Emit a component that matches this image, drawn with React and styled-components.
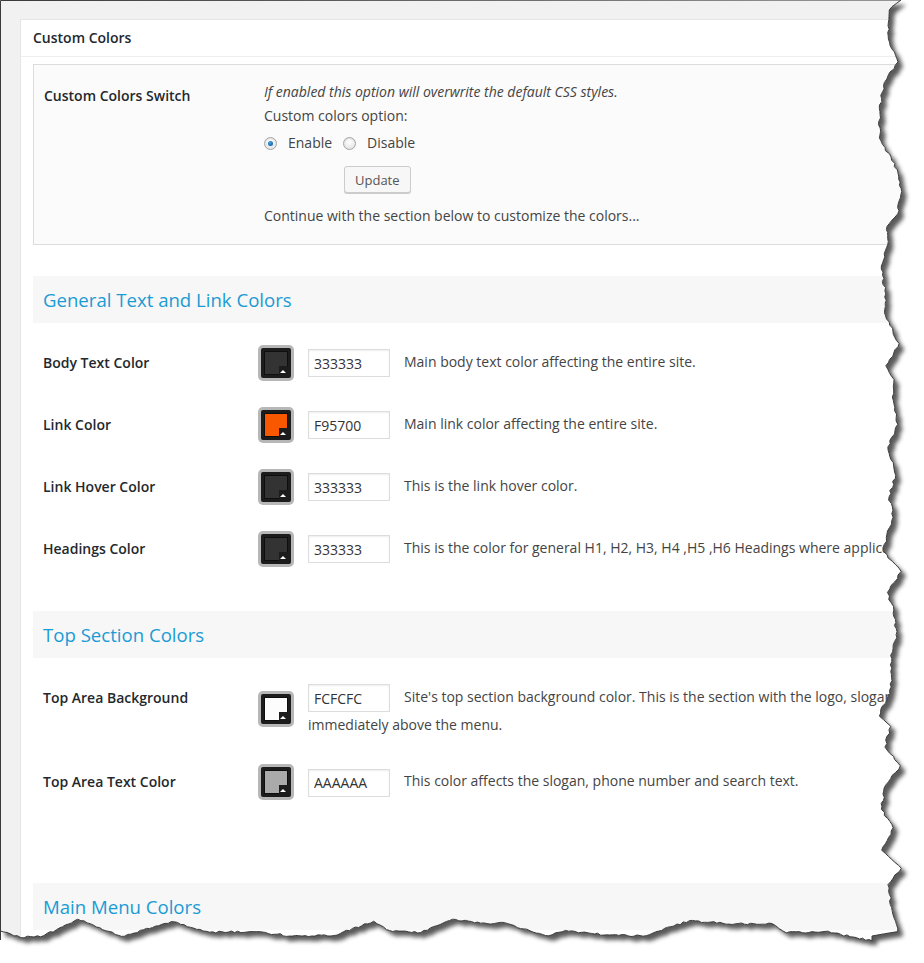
import React from "react";
import styled, { createGlobalStyle } from "styled-components";

const GlobalStyle = createGlobalStyle`
  html, body {
    margin: 0;
    padding: 0;
    background: #fff;
  }
  body {
    font-family: "Open Sans", "Liberation Sans", sans-serif;
    font-size: 14px;
    color: #444;
  }
`;

// seeded random so the torn edge is the same on every run
const rng = (seed) => {
  let s = seed;
  return () => {
    s = (s * 16807) % 2147483647;
    return (s - 1) / 2147483646;
  };
};

const buildEdge = () => {
  const r = rng(11);
  const pts = [[901, 0]];
  let prev = [901, 0];
  let y = 0;
  while (y < 932) {
    const step = 10 + r() * 22;
    const ny = Math.min(y + step, 936);
    const nx = ny >= 936 ? 872 : 879 + r() * 23;
    const n = Math.max(2, Math.floor((ny - y) / 3));
    for (let i = 1; i <= n; i++) {
      const t = i / n;
      const jit = i < n ? (r() - 0.5) * 2.6 : 0;
      pts.push([prev[0] + (nx - prev[0]) * t + jit, y + (ny - y) * t]);
    }
    prev = [nx, ny];
    y = ny;
  }
  // bottom edge, right to left
  let x = prev[0];
  let by = 941;
  pts.push([x, by]);
  prev = [x, by];
  while (x > 0) {
    const step = 14 + r() * 36;
    const nx = Math.max(x - step, 0);
    const peak = r() < 0.22;
    const ny = peak ? 918 + r() * 6 : 929 + r() * 9;
    const n = Math.max(2, Math.floor((x - nx) / 3));
    for (let i = 1; i <= n; i++) {
      const t = i / n;
      const jit = i < n ? (r() - 0.5) * 2 : 0;
      pts.push([prev[0] + (nx - prev[0]) * t, prev[1] + (ny - prev[1]) * t + jit]);
    }
    prev = [nx, ny];
    x = nx;
  }
  return pts;
};

const EDGE = buildEdge();
const EDGE_POINTS = EDGE.map((p) => `${p[0].toFixed(1)},${p[1].toFixed(1)}`).join(" ");
const CLIP = `polygon(0px 0px, ${EDGE.map((p) => `${p[0].toFixed(1)}px ${p[1].toFixed(1)}px`).join(", ")})`;

const Frame = styled.div`
  position: relative;
  width: 924px;
  height: 963px;
  overflow: hidden;
  background: #fff;
`;

const Shadow = styled.svg`
  position: absolute;
  top: 0;
  left: 0;
  width: 924px;
  height: 963px;
  z-index: 0;
`;

const Outline = styled.svg`
  position: absolute;
  top: 0;
  left: 0;
  width: 924px;
  height: 963px;
  z-index: 2;
  pointer-events: none;
`;

const Paper = styled.div`
  position: relative;
  z-index: 1;
  width: 924px;
  height: 963px;
  box-sizing: border-box;
  padding: 19px 0 0 20px;
  background: #f1f1f1;
  overflow: hidden;
`;

const Panel = styled.div`
  width: 1200px;
  background: #fff;
  border: 1px solid #e5e5e5;
`;

const PanelHeader = styled.h3`
  margin: 0;
  height: 36px;
  line-height: 36px;
  padding-left: 12px;
  font-size: 14px;
  font-weight: 600;
  color: #23282d;
  border-bottom: 1px solid #eee;
`;

const PanelBody = styled.div`
  padding: 7px 0 0 12px;
`;

const SwitchBox = styled.div`
  display: grid;
  grid-template-columns: 220px 1fr;
  border: 1px solid #dcdcdc;
  background: #fbfbfb;
  padding: 15px 10px 16px;
`;

const SwitchLabel = styled.div`
  margin-top: 4px;
  line-height: 24px;
  font-weight: 600;
  color: #23282d;
`;

const SwitchColumn = styled.div`
  display: flex;
  flex-direction: column;
  align-items: flex-start;
  line-height: 24px;
`;

const Note = styled.div`
  font-style: italic;
`;

const RadioRow = styled.div`
  display: flex;
  align-items: center;
  height: 26px;
  margin-top: 2px;
  gap: 11px;
`;

const RadioItem = styled.label`
  display: flex;
  align-items: center;
  gap: 11px;
`;

const Radio = styled.span`
  position: relative;
  width: 11px;
  height: 11px;
  border-radius: 50%;
  border: 1px solid #a4a4a4;
  background: radial-gradient(circle at 50% 35%, #fff 0%, #e8e8e8 70%, #d4d4d4 100%);
  box-shadow: inset 0 1px 1px rgba(0, 0, 0, 0.08);

  &::after {
    content: "";
    display: ${(p) => (p.$checked ? "block" : "none")};
    position: absolute;
    top: 3px;
    left: 3px;
    width: 5px;
    height: 5px;
    border-radius: 50%;
    background: radial-gradient(circle at 40% 35%, #4aa3e0 0%, #1a6fb5 60%, #0f4d88 100%);
  }
`;

const Button = styled.button`
  margin: 10px 0 0 80px;
  height: 27px;
  padding: 0 10px;
  font-family: inherit;
  font-size: 13px;
  color: #555;
  background: #f7f7f7;
  border: 1px solid #ccc;
  border-radius: 3px;
  box-shadow: 0 1px 0 #ccc;
`;

const Continue = styled.div`
  margin-top: 11px;
`;

const Section = styled.div`
  margin-top: ${(p) => p.$gap || 31}px;
`;

const SectionTitle = styled.h2`
  margin: 0 0 9px;
  height: 47px;
  line-height: 48px;
  padding-left: 10px;
  background: #f7f7f7;
  font-size: 18.6px;
  font-weight: 400;
  color: #1a9bd4;
`;

const Row = styled.div`
  display: grid;
  grid-template-columns: 215px 50px 800px;
  align-items: start;
  padding: 13px 0 13px 10px;
`;

const RowLabel = styled.div`
  padding-top: 8px;
  line-height: 20px;
  font-weight: 600;
  color: #23282d;
`;

const Swatch = styled.div`
  align-self: center;
  width: 36px;
  height: 36px;
  box-sizing: border-box;
  padding: 3px;
  border-radius: 5px;
  background: #b7b7b7;
`;

const SwatchFrame = styled.div`
  position: relative;
  width: 30px;
  height: 30px;
  box-sizing: border-box;
  padding: 3px;
  border-radius: 2px;
  background: #1c1c1c;

  &::before {
    content: "";
    display: block;
    width: 24px;
    height: 24px;
    border: 1px solid #0e0e0e;
    background: ${(p) => p.$color};
    box-sizing: border-box;
  }
  &::after {
    content: "";
    position: absolute;
    right: 3px;
    bottom: 3px;
    width: 9px;
    height: 9px;
    background: #1c1c1c;
  }
`;

const Arrow = styled.span`
  position: absolute;
  right: 5px;
  bottom: 5px;
  z-index: 1;
  width: 0;
  height: 0;
  border-left: 3px solid transparent;
  border-right: 3px solid transparent;
  border-bottom: 3px solid #fff;
`;

const Content = styled.div`
  padding-top: 4px;
  line-height: 26px;
  color: #444;
`;

const HexInput = styled.input`
  width: 82px;
  height: 28px;
  box-sizing: border-box;
  margin: 0 14px 0 0;
  padding: 0 5px;
  vertical-align: middle;
  font-family: inherit;
  font-size: 14px;
  color: #333;
  background: #fff;
  border: 1px solid #ddd;
  box-shadow: inset 0 1px 2px rgba(0, 0, 0, 0.07);
`;

const general = [
  { label: "Body Text Color", color: "#333333", hex: "333333", text: "Main body text color affecting the entire site." },
  { label: "Link Color", color: "#F95700", hex: "F95700", text: "Main link color affecting the entire site." },
  { label: "Link Hover Color", color: "#333333", hex: "333333", text: "This is the link hover color." },
  {
    label: "Headings Color",
    color: "#333333",
    hex: "333333",
    text: "This is the color for general H1, H2, H3, H4 ,H5 ,H6 Headings where applicable.",
  },
];

const topArea = [
  {
    label: "Top Area Background",
    color: "#FCFCFC",
    hex: "FCFCFC",
    text: "Site's top section background color. This is the section with the logo, slogan, phone number and search, immediately above the menu.",
  },
  { label: "Top Area Text Color", color: "#AAAAAA", hex: "AAAAAA", text: "This color affects the slogan, phone number and search text." },
];

const ColorRow = ({ item }) => (
  <Row>
    <RowLabel>{item.label}</RowLabel>
    <Swatch>
      <SwatchFrame $color={item.color}>
        <Arrow />
      </SwatchFrame>
    </Swatch>
    <Content>
      <HexInput readOnly value={item.hex} />
      {item.text}
    </Content>
  </Row>
);

const App = () => {
  return (
    <Frame>
      <GlobalStyle />
      <Shadow viewBox="0 0 924 963">
        <defs>
          <filter id="tear-blur" x="-5%" y="-5%" width="110%" height="110%">
            <feGaussianBlur stdDeviation="2.2" />
          </filter>
        </defs>
        <polygon
          points={`0,0 ${EDGE_POINTS}`}
          transform="translate(5 5)"
          fill="#3c3c3c"
          opacity="0.85"
          filter="url(#tear-blur)"
        />
      </Shadow>
      <Paper style={{ clipPath: CLIP }}>
        <Panel>
          <PanelHeader>Custom Colors</PanelHeader>
          <PanelBody>
            <SwitchBox>
              <SwitchLabel>Custom Colors Switch</SwitchLabel>
              <SwitchColumn>
                <Note>If enabled this option will overwrite the default CSS styles.</Note>
                <div>Custom colors option:</div>
                <RadioRow>
                  <RadioItem>
                    <Radio $checked />
                    Enable
                  </RadioItem>
                  <RadioItem>
                    <Radio />
                    Disable
                  </RadioItem>
                </RadioRow>
                <Button>Update</Button>
                <Continue>Continue with the section below to customize the colors...</Continue>
              </SwitchColumn>
            </SwitchBox>

            <Section>
              <SectionTitle>General Text and Link Colors</SectionTitle>
              {general.map((item) => (
                <ColorRow key={item.label} item={item} />
              ))}
            </Section>

            <Section>
              <SectionTitle>Top Section Colors</SectionTitle>
              {topArea.map((item) => (
                <ColorRow key={item.label} item={item} />
              ))}
            </Section>

            <Section $gap={70}>
              <SectionTitle>Main Menu Colors</SectionTitle>
            </Section>
          </PanelBody>
        </Panel>
      </Paper>
      <Outline viewBox="0 0 924 963">
        <polyline points={`0.5,940 0.5,0.5 ${EDGE_POINTS} 0.5,940`} fill="none" stroke="#3a3a3a" strokeWidth="1" />
      </Outline>
    </Frame>
  );
};

export default App;
